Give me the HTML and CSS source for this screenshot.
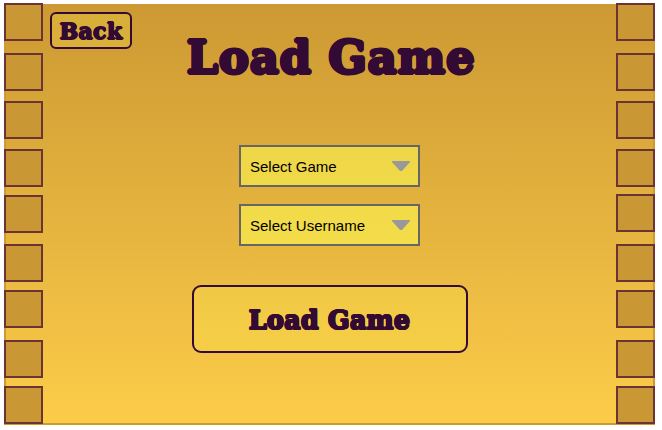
FILE: index.html
```html
<!DOCTYPE html>
<html lang="en">
<head>
<meta charset="utf-8">
<title>Load Game</title>
<link rel="stylesheet" href="styles.css">
</head>
<body>
<div class="screen">
  <div class="film left"><i></i><i></i><i></i><i></i><i></i><i></i><i></i><i></i><i></i></div>
  <main class="content">
    <button class="back"><span>Back</span></button>
    <h1><span>Load Game</span></h1>
    <div class="fields">
      <div class="select"><span>Select Game</span><svg width="18" height="10" viewBox="0 0 18 10"><path d="M0 0H18V1L10 10H8L0 1Z"/></svg></div>
      <div class="select"><span>Select Username</span><svg width="18" height="10" viewBox="0 0 18 10"><path d="M0 0H18V1L10 10H8L0 1Z"/></svg></div>
    </div>
    <button class="load"><span>Load Game</span></button>
  </main>
  <div class="film right"><i></i><i></i><i></i><i></i><i></i><i></i><i></i><i></i><i></i></div>
</div>
</body>
</html>
```
FILE: styles.css
```css
* { box-sizing: border-box; }
body { margin: 0; padding: 4px; background: #fff; overflow: hidden; }
.screen {
  display: flex;
  justify-content: space-between;
  width: 651px;
  height: 421px;
  border: solid #cc9933;
  border-width: 0 2px 2px;
  background: linear-gradient(#cc9933, #fccc49) padding-box;
}
.film { width: 39px; flex: none; margin-top: -1px; }
.left { margin-left: -2px; }
.right { margin-right: -2px; }
.film i {
  display: block;
  height: 38px;
  margin-bottom: 10px;
  border: 2px solid #6c3335;
  background: #c99834;
}
.film i:nth-child(1) { margin-bottom: 12px; }
.film i:nth-child(4) { margin-bottom: 8px; }
.film i:nth-child(5) { margin-bottom: 11px; }
.film i:nth-child(6) { margin-bottom: 8px; }
.film i:nth-child(7) { margin-bottom: 12px; }
.film i:nth-child(8) { margin-bottom: 8px; }
.right i:nth-child(4) { margin-bottom: 7px; }
.right i:nth-child(5) { margin-bottom: 12px; }
.content {
  flex: 1;
  display: flex;
  flex-direction: column;
  align-items: center;
}
button, h1 {
  --w: .7px;
  --d: calc(var(--w) * .7);
  font-family: "DejaVu Serif", serif;
  font-weight: bold;
  color: #330a33;
  white-space: nowrap;
}
/* Rounded thickening of the display lettering */
button span, h1 span {
  text-shadow:
    var(--w) 0 #330a33, calc(var(--w) * -1) 0 #330a33,
    0 var(--w) #330a33, 0 calc(var(--w) * -1) #330a33,
    var(--d) var(--d) #330a33, calc(var(--d) * -1) var(--d) #330a33,
    var(--d) calc(var(--d) * -1) #330a33, calc(var(--d) * -1) calc(var(--d) * -1) #330a33;
}
button {
  display: flex;
  align-items: center;
  justify-content: center;
  padding: 0;
  border: 2px solid #330a33;
  background: rgba(255, 245, 76, .22);
}
.back {
  align-self: flex-start;
  width: 82px;
  height: 37px;
  margin: 8px 0 0 7px;
  border-radius: 6px;
  font-size: 22px;
  letter-spacing: .4px;
}
h1 {
  --w: 1.6px;
  height: 60px;
  margin: -21px 0 0 3px;
  font-size: 45px;
  line-height: 60px;
  letter-spacing: .8px;
}
.fields {
  display: flex;
  flex-direction: column;
  gap: 17px;
  margin-top: 57px;
}
.select {
  display: flex;
  align-items: center;
  justify-content: space-between;
  width: 181px;
  height: 42px;
  padding: 0 8px 0 9px;
  border: 2px solid #666;
  background: rgba(255, 255, 84, .53);
  color: #000;
  font: 15px "Liberation Sans", Arial, sans-serif;
}
.select svg { fill: #999; }
.load {
  --w: .9px;
  width: 276px;
  height: 68px;
  margin-top: 39px;
  border-radius: 9px;
  font-size: 25.5px;
  letter-spacing: .2px;
}
.load span { padding-top: 2px; }
```
